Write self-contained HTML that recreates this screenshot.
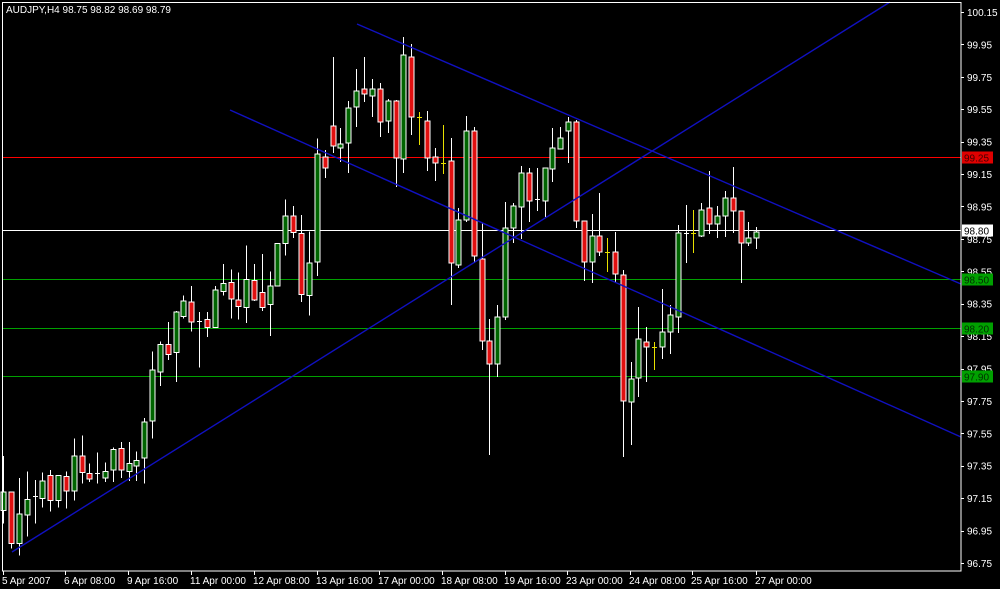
<!DOCTYPE html>
<html><head><meta charset="utf-8"><style>
html,body{margin:0;padding:0;background:#000;}
body{width:1000px;height:589px;overflow:hidden;position:relative;font-family:"Liberation Sans",sans-serif;}
svg{position:absolute;left:0;top:0;}
svg text{font-family:"Liberation Sans",sans-serif;font-size:10px;}
#hl rect,#c,#ax rect,#fr{shape-rendering:crispEdges;}
</style></head><body>
<svg id="s" width="1000" height="589" xmlns="http://www.w3.org/2000/svg">
<rect width="1000" height="589" fill="#000"/>
<g id="hl">
<rect x="3" y="157" width="958" height="1" fill="#ff0000"/>
<rect x="3" y="230" width="958" height="1" fill="#ffffff"/>
<rect x="3" y="279" width="958" height="1" fill="#00a000"/>
<rect x="3" y="328" width="958" height="1" fill="#00a000"/>
<rect x="3" y="376" width="958" height="1" fill="#00a000"/>
</g>
<g id="c"></g>
<g stroke="#1010c0" stroke-width="1.4">
<line x1="12" y1="552" x2="890" y2="2"/>
<line x1="357" y1="24" x2="961" y2="284"/>
<line x1="230" y1="110" x2="961" y2="437"/>
</g>
<rect id="fr" x="2.5" y="2.5" width="958.5" height="568.5" fill="none" stroke="#fff"/>
<g id="ax" fill="#fff"></g>
<text x="6" y="13" fill="#fff">AUDJPY,H4  98.75 98.82 98.69 98.79</text>
</svg>
<script>
var NS="http://www.w3.org/2000/svg";
function el(p,t,a,txt){var e=document.createElementNS(NS,t);for(var k in a)e.setAttribute(k,a[k]);if(txt)e.textContent=txt;p.appendChild(e);return e;}
var g=document.getElementById('c');
var f=1.0909;
var A=[[3,451,468,418,480,'g'],[11,451,498,451,503,'r'],[19,471,498,438,509,'g'],[27,458,472,432,492,'g'],[35,455,457,440,480,'d'],[42,441,457,433,465,'g'],[50,436,459,431,469,'r'],[58,436,459,436,465,'g'],[66,437,450,432,466,'r'],[74,418,450,402,459,'g'],[82,418,433,399,443,'r'],[89,434,439,425,442,'r'],[97,434,435,415,443,'d'],[105,432,438,424,442,'g'],[113,412,431,410,442,'g'],[121,411,431,405,438,'r'],[129,425,432,405,441,'g'],[136,422,427,414,441,'g'],[144,387,420,383,443,'g'],[152,339,386,322,402,'g'],[160,316,341,313,354,'g'],[168,316,325,295,330,'r'],[176,286,323,285,350,'g'],[183,276,290,271,292,'g'],[191,277,295,262,304,'r'],[199,294,296,286,337,'d'],[207,293,300,286,309,'r'],[215,266,300,262,300,'g'],[223,260,267,242,271,'g'],[231,259,274,247,292,'r'],[238,275,281,250,293,'r'],[246,256,282,225,296,'g'],[254,257,275,242,276,'r'],[262,268,282,233,285,'r'],[270,262,279,249,308,'g'],[277,223,262,223,262,'g'],[285,198,223,183,234,'g'],[293,198,213,189,218,'r'],[301,214,270,197,277,'r'],[309,241,271,212,289,'g'],[317,141,240,127,253,'g']];
A.forEach(function(c){for(var i=1;i<5;i++)c[i]=c[i]*f;});
var B=[[325,157,168,150,178,'r'],[333,126,146,57,153,'r'],[340,144,148,128,162,'g'],[348,108,143,101,173,'g'],[356,91,107,69,127,'g'],[364,89,94,57,102,'r'],[372,89,96,79,117,'g'],[380,89,122,83,137,'r'],[388,101,121,99,133,'g'],[396,101,158,100,187,'r'],[403,55,159,37,173,'g'],[411,57,117,44,135,'r'],[419,117,117,112,145,'y'],[427,121,158,111,171,'r'],[435,157,163,148,181,'r'],[443,163,163,125,174,'y'],[451,161,263,138,305,'r'],[458,220,265,208,268,'g'],[466,131,220,116,222,'g'],[474,131,256,127,263,'r'],[482,259,341,223,350,'r'],[489,341,364,319,455,'r'],[497,317,364,305,377,'g'],[505,228,317,202,320,'g'],[513,206,228,203,243,'g'],[521,173,207,166,239,'g'],[529,173,201,168,222,'r'],[537,199,201,168,211,'d'],[545,168,201,168,217,'g'],[552,148,169,128,182,'g'],[560,138,149,127,149,'g'],[568,122,131,117,163,'g'],[576,122,221,120,228,'r'],[584,221,262,221,281,'r'],[592,236,262,214,283,'g'],[599,236,252,193,256,'r'],[607,252,252,238,272,'y'],[615,252,274,232,282,'r'],[623,275,401,270,457,'r'],[631,379,402,362,445,'g'],[638,339,378,307,397,'g'],[646,342,347,327,382,'r'],[654,347,347,342,370,'y'],[662,332,347,289,359,'g'],[670,315,332,305,354,'g'],[678,233,317,225,333,'g'],[686,233,233,205,263,'d'],[693,233,233,210,253,'y'],[701,210,236,203,237,'g'],[709,208,224,171,234,'r'],[717,216,224,206,238,'g'],[725,198,216,191,237,'g'],[733,198,211,167,233,'r'],[741,211,243,211,283,'r'],[748,238,243,222,246,'g'],[756,232,238,227,249,'g']];
A.concat(B).forEach(function(c){
 var x=c[0],t=c[1],b=c[2],h=c[3],l=c[4],ty=c[5];
 var wc=(ty=='y')?'#e8e000':'#fff';
 el(g,'line',{x1:x+0.5,y1:h,x2:x+0.5,y2:l,stroke:wc});
 if(ty=='d'||ty=='y'){el(g,'line',{x1:x-2,y1:Math.round(t)+0.5,x2:x+3,y2:Math.round(t)+0.5,stroke:wc});return;}
 if(b-t<2)b=t+2;
 el(g,'rect',{x:x-2,y:t,width:5,height:b-t,fill:ty=='g'?'#006400':'#e01010',stroke:'#fff','stroke-width':1});
});
var ax=document.getElementById('ax');
var labs=["100.15","99.95","99.75","99.55","99.35","99.15","98.95","98.75","98.55","98.35","98.15","97.95","97.75","97.55","97.35","97.15","96.95","96.75"];
labs.forEach(function(s,i){var y=12+i*32.41;el(ax,'rect',{x:961,y:Math.round(y),width:3,height:1});el(ax,'text',{x:967,y:y+4},s);});
function box(y,bg,fg,s){el(ax,'rect',{x:962,y:y-6,width:31,height:12,fill:bg});el(ax,'text',{x:964,y:y+4,fill:fg},s);}
box(157.5,'#e00000','#400000','99.25');box(230.5,'#fff','#000','98.80');box(279.5,'#00a000','#003000','98.50');box(328.5,'#00a000','#003000','98.20');box(376.5,'#00a000','#003000','97.90');
var bl=[[3,"5 Apr 2007"],[65,"6 Apr 08:00"],[128,"9 Apr 16:00"],[191,"11 Apr 00:00"],[254,"12 Apr 08:00"],[317,"13 Apr 16:00"],[379,"17 Apr 00:00"],[442,"18 Apr 08:00"],[505,"19 Apr 16:00"],[567,"23 Apr 00:00"],[630,"24 Apr 08:00"],[692,"25 Apr 16:00"],[756,"27 Apr 00:00"]];
bl.forEach(function(b){el(ax,'rect',{x:b[0],y:571,width:1,height:4});el(ax,'text',{x:b[0]-1,y:584},b[1]);});
</script>
</body></html>
